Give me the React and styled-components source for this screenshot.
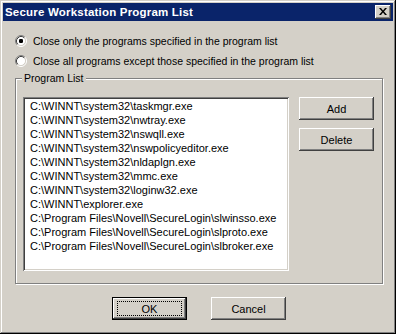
import styled, { createGlobalStyle } from "styled-components"

const programs = [
  "C:\\WINNT\\system32\\taskmgr.exe",
  "C:\\WINNT\\system32\\nwtray.exe",
  "C:\\WINNT\\system32\\nswqll.exe",
  "C:\\WINNT\\system32\\nswpolicyeditor.exe",
  "C:\\WINNT\\system32\\nldaplgn.exe",
  "C:\\WINNT\\system32\\mmc.exe",
  "C:\\WINNT\\system32\\loginw32.exe",
  "C:\\WINNT\\explorer.exe",
  "C:\\Program Files\\Novell\\SecureLogin\\slwinsso.exe",
  "C:\\Program Files\\Novell\\SecureLogin\\slproto.exe",
  "C:\\Program Files\\Novell\\SecureLogin\\slbroker.exe",
]

const RadioIcon = ({checked}) => (
  <svg width="12" height="12" viewBox="0 0 12 12">
    <circle cx="6" cy="6" r="4.5" fill="#fff" />
    <path d="M2.11 9.89 A5.5 5.5 0 0 1 9.89 2.11" fill="none" stroke="#808080" strokeWidth="1" />
    <path d="M9.89 2.11 A5.5 5.5 0 0 1 2.11 9.89" fill="none" stroke="#fff" strokeWidth="1" />
    <path d="M2.82 9.18 A4.5 4.5 0 0 1 9.18 2.82" fill="none" stroke="#404040" strokeWidth="1" />
    <path d="M9.18 2.82 A4.5 4.5 0 0 1 2.82 9.18" fill="none" stroke="#d4d0c8" strokeWidth="1" />
    {checked && <rect x="4" y="4" width="4" height="4" rx="1.2" fill="#000" />}
  </svg>
)

const App = () => {
  return (
    <>
      <Global />
      <Window>
        <TitleBar>
          <span>Secure Workstation Program List</span>
          <CloseButton aria-label="Close">
            <svg width="8" height="7" viewBox="0 0 8 7">
              <path d="M0 0h2l2 2.5L6 0h2L5 3.5 8 7H6L4 4.5 2 7H0l3-3.5z" fill="#000" />
            </svg>
          </CloseButton>
        </TitleBar>

        <Body>
          <Options>
            <Radio>
              <RadioIcon checked />
              <span>Close only the programs specified in the program list</span>
            </Radio>
            <Radio>
              <RadioIcon />
              <span>Close all programs except those specified in the program list</span>
            </Radio>
          </Options>

          <Group>
            <legend>Program List</legend>
            <ListBox>
              {programs.map((p) => (
                <li key={p}>{p}</li>
              ))}
            </ListBox>
            <SideButtons>
              <Button>Add</Button>
              <Button>Delete</Button>
            </SideButtons>
          </Group>

          <Footer>
            <Button $default>
              <Focus>OK</Focus>
            </Button>
            <Button>Cancel</Button>
          </Footer>
        </Body>
      </Window>
    </>
  )
}

export default App

const Global = createGlobalStyle`
  html, body {
    margin: 0;
    padding: 0;
    background: #d4d0c8;
  }
  * {
    box-sizing: border-box;
  }
`

const Window = styled.div`
  width: 396px;
  height: 334px;
  padding: 3px;
  display: flex;
  flex-direction: column;
  background: #d4d0c8;
  font-family: "Liberation Sans", Arial, sans-serif;
  color: #000;
  box-shadow: inset -1px -1px #000, inset 1px 1px #d4d0c8,
    inset -2px -2px #808080, inset 2px 2px #fff;
`

const TitleBar = styled.div`
  height: 18px;
  flex-shrink: 0;
  display: flex;
  align-items: center;
  justify-content: space-between;
  padding: 0 2px 0 2px;
  background: #0a246a;
  color: #fff;
  font-weight: 700;
  font-size: 11.5px;
  letter-spacing: 0.2px;
`

const CloseButton = styled.div`
  width: 16px;
  height: 14px;
  display: flex;
  align-items: center;
  justify-content: center;
  background: #d4d0c8;
  box-shadow: inset -1px -1px #404040, inset 1px 1px #fff,
    inset -2px -2px #808080, inset 2px 2px #d4d0c8;
  padding-bottom: 1px;
`

const Body = styled.div`
  flex: 1;
  display: flex;
  flex-direction: column;
  padding: 10px 10px 0 12px;
  font-size: 10.5px;
`

const Options = styled.div`
  display: flex;
  flex-direction: column;
`

const Radio = styled.label`
  height: 20px;
  display: flex;
  align-items: center;
  gap: 6px;

  svg {
    flex-shrink: 0;
  }
`

const Group = styled.fieldset`
  margin: 1px 0 0 0;
  padding: 12px 8px 12px 7px;
  border: 1px solid #808080;
  box-shadow: inset 1px 1px #fff, 1px 1px #fff;
  display: flex;
  gap: 10px;
  align-items: flex-start;

  legend {
    margin-left: -1px;
    padding: 0 2px;
    line-height: 13px;
    height: 13px;
    background: #d4d0c8;
  }
`

const ListBox = styled.ul`
  list-style: none;
  margin: 0;
  width: 266px;
  height: 174px;
  padding: 2px 0 0 7px;
  background: #fff;
  font-size: 11px;
  box-shadow: inset 1px 1px #808080, inset -1px -1px #fff,
    inset 2px 2px #404040, inset -2px -2px #d4d0c8;

  li {
    height: 14px;
    line-height: 14px;
    white-space: nowrap;
  }
`

const SideButtons = styled.div`
  display: flex;
  flex-direction: column;
  gap: 8px;
`

const Button = styled.button`
  width: 75px;
  height: 23px;
  padding: 0;
  display: flex;
  align-items: center;
  justify-content: center;
  border: none;
  background: #d4d0c8;
  font-family: "Liberation Sans", Arial, sans-serif;
  font-size: 11px;
  color: #000;
  box-shadow: ${(p) =>
    p.$default
      ? "inset 0 0 0 1px #000, inset -2px -2px #404040, inset 2px 2px #fff, inset -3px -3px #808080"
      : "inset -1px -1px #404040, inset 1px 1px #fff, inset -2px -2px #808080, inset 2px 2px #d4d0c8"};
`

const Focus = styled.span`
  width: 65px;
  height: 15px;
  display: flex;
  align-items: center;
  justify-content: center;
  border: 1px dotted #000;
`

const Footer = styled.div`
  margin-top: 13px;
  display: flex;
  justify-content: center;
  gap: 24px;
  margin-right: -2px;
  margin-left: -2px;
`
